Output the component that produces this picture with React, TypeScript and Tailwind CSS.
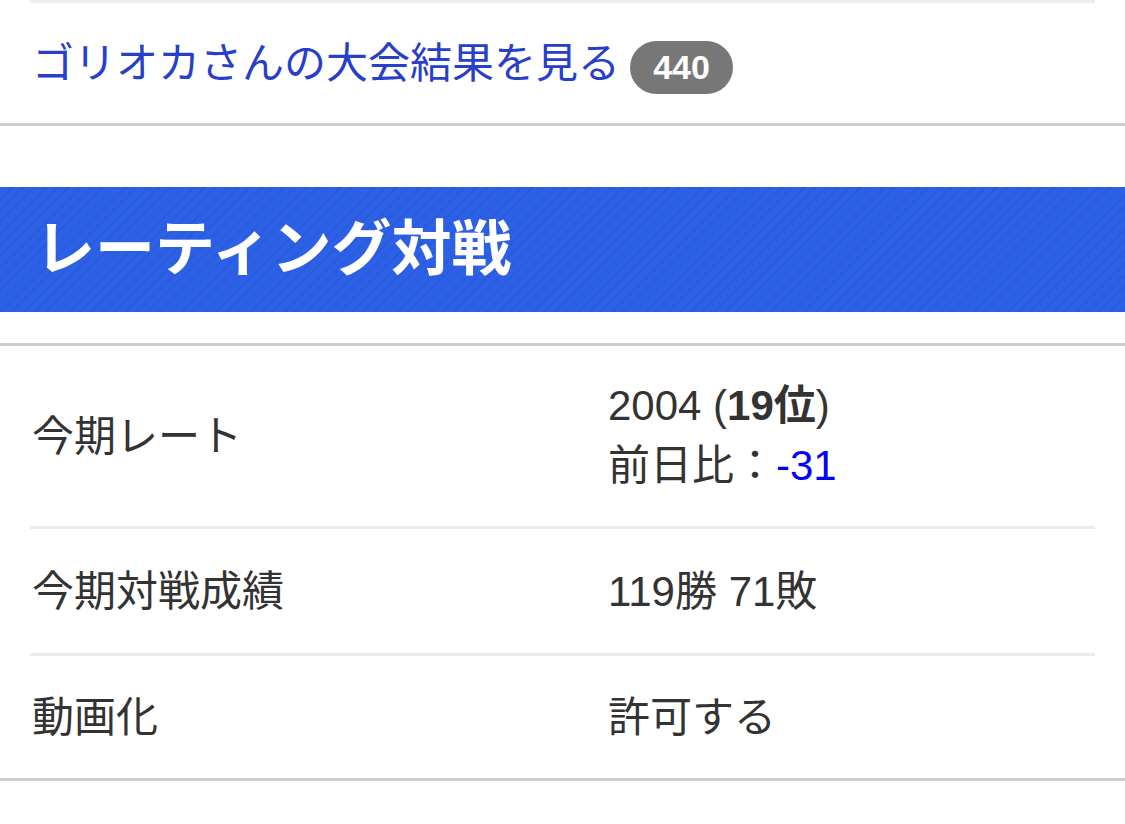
const font = { fontFamily: '"Liberation Sans", "Noto Sans CJK JP", sans-serif' };

interface IRow {
  label: string;
  value: React.ReactNode;
  height: string;
}

const rows: IRow[] = [
  {
    label: "今期レート",
    height: "h-[180px]",
    value: (
      <div className="leading-[60px]">
        <div>
          2004 (<span className="font-bold">19位</span>)
        </div>
        <div>
          前日比：<span className="text-[#0000ff]">-31</span>
        </div>
      </div>
    ),
  },
  { label: "今期対戦成績", height: "h-[124px]", value: "119勝 71敗" },
  { label: "動画化", height: "h-[122px]", value: "許可する" },
];

const App = () => {
  return (
    <div className="w-[1125px] h-[824px] bg-white overflow-hidden" style={font}>
      <div className="mx-[30px] h-[3px] bg-[#eeeeee]" />

      {/* tournament link */}
      <div className="h-[120px] flex items-center px-[32px] gap-[10px]">
        <span className="text-[42px] text-[#2840c9] leading-none pt-[2px]">
          ゴリオカさんの大会結果を見る
        </span>
        <span className="mt-[8px] h-[53px] w-[103px] rounded-full bg-[#777777] text-white font-bold text-[34px] flex items-center justify-center">
          440
        </span>
      </div>
      <div className="h-[3px] bg-[#cccccc]" />

      {/* section header */}
      <div className="mt-[61px] h-[125px] flex items-center px-[35px] bg-[#2c60e6] bg-[repeating-linear-gradient(135deg,rgba(0,0,0,0.05)_0px,rgba(0,0,0,0.05)_2px,transparent_2px,transparent_8px)]">
        <h2 className="text-[60px] font-bold text-white leading-none">
          レーティング対戦
        </h2>
      </div>

      <div className="mt-[31px] h-[3px] bg-[#cccccc]" />
      <div className="px-[30px]">
        {rows.map((row, i) => (
          <div key={row.label}>
            {i > 0 && <div className="h-[3px] bg-[#ebebeb]" />}
            <div className={`${row.height} flex items-center text-[42px] text-[#333333]`}>
              <div className="w-[578px] pl-[2px]">{row.label}</div>
              <div className="flex-1">{row.value}</div>
            </div>
          </div>
        ))}
      </div>
      <div className="h-[3px] bg-[#cccccc]" />
    </div>
  );
};

export default App;
